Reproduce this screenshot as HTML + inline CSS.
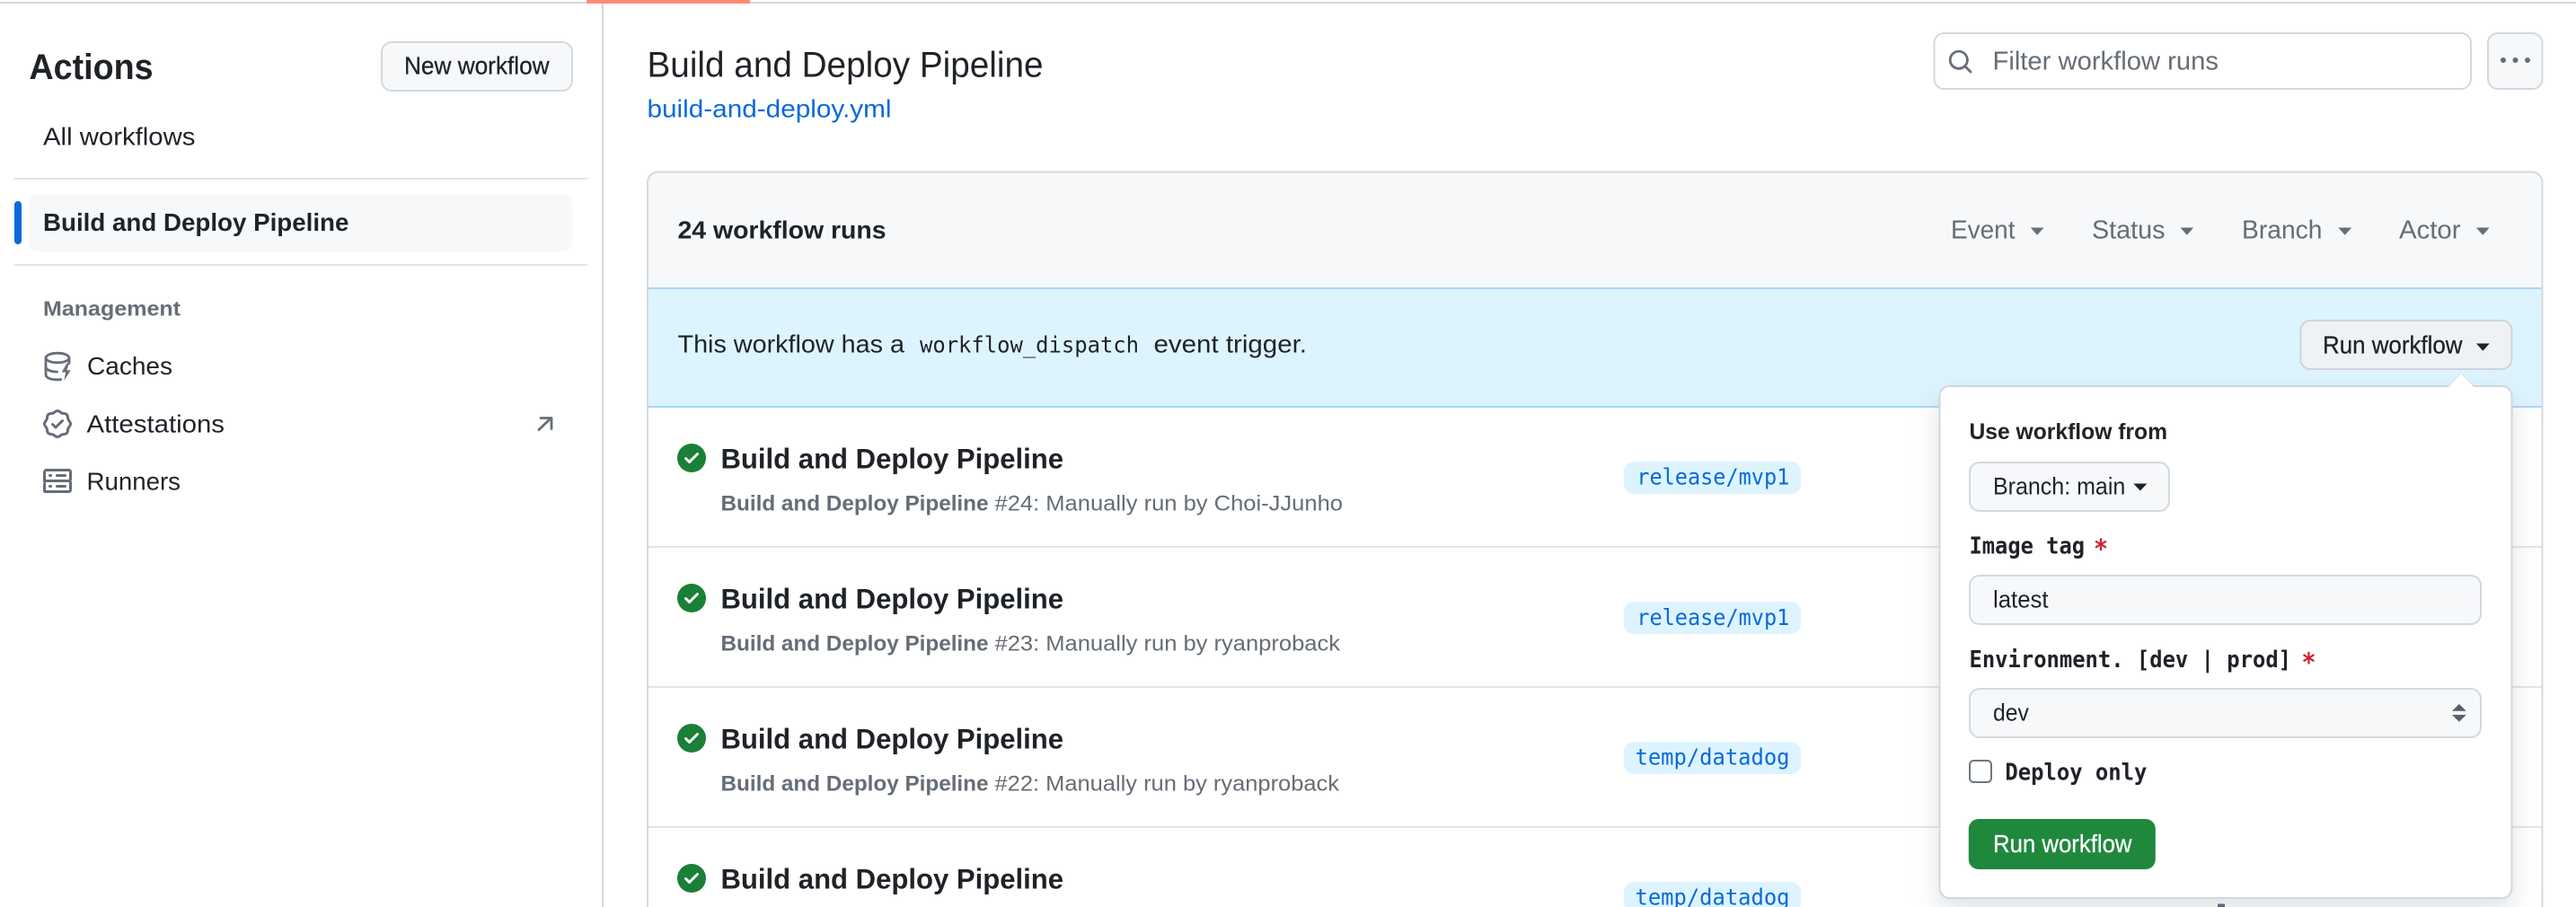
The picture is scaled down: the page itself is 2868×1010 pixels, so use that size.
<!DOCTYPE html>
<html lang="en"><head><meta charset="utf-8"><title>Build and Deploy Pipeline</title>
<style>
html,body{margin:0;padding:0;background:#fff;width:2868px;height:1010px;overflow:hidden}
svg{display:block}
text{font-family:"Liberation Sans",Arial,sans-serif;font-size:27.5px;fill:#1f2328;white-space:pre}
.b{font-weight:700}
.m{stroke:currentColor;stroke-width:.3px}
.mono{font-family:"DejaVu Sans Mono","Liberation Mono",monospace;font-size:25px}
.g{fill:#656d76}
.btn{fill:#f6f8fa;stroke:#d1d9e0;stroke-width:2}
.sub{font-size:24px;fill:#656d76}
.ttl{font-size:31.5px;font-weight:700}
</style></head><body>
<svg xmlns="http://www.w3.org/2000/svg" width="2868" height="1010" viewBox="0 0 2868 1010">
<defs>
<g id="check"><path fill="#1a7f37" d="M8 16A8 8 0 1 1 8 0a8 8 0 0 1 0 16Zm3.78-9.72a.751.751 0 0 0-.018-1.042.751.751 0 0 0-1.042-.018L6.75 9.19 5.28 7.72a.751.751 0 0 0-1.042.018.751.751 0 0 0-.018 1.042l2 2a.75.75 0 0 0 1.06 0Z"/></g>
<filter id="sh" x="-15%" y="-15%" width="130%" height="135%"><feDropShadow dx="0" dy="12" stdDeviation="14" flood-color="#8c959f" flood-opacity=".28"/></filter>
</defs>
<!-- top rule -->
<rect x="0" y="2" width="2868" height="2" fill="#d3d8dd"/>
<rect x="653" y="0" width="182" height="4" fill="#fd8c73"/>
<!-- sidebar -->
<rect x="670" y="4" width="2" height="1006" fill="#d0d7de"/>
<text class="b" x="32.500" y="88" style="font-size:40px" textLength="138" lengthAdjust="spacingAndGlyphs">Actions</text>
<rect class="btn" x="425" y="47" width="212" height="54" rx="11"/>
<text class="m" x="450" y="82.500" textLength="161.600" lengthAdjust="spacingAndGlyphs" style="color:#1f2328">New workflow</text>
<text x="48" y="161.500" textLength="169.400" lengthAdjust="spacingAndGlyphs">All workflows</text>
<rect x="16" y="198" width="638" height="2" fill="#e1e4e8"/>
<rect x="32" y="216" width="605.500" height="64" rx="11" fill="#f6f8fa"/>
<rect x="16" y="224" width="8" height="48" rx="4" fill="#0969da"/>
<text class="b" x="48" y="257" textLength="340.400" lengthAdjust="spacingAndGlyphs">Build and Deploy Pipeline</text>
<rect x="16" y="294" width="638" height="2" fill="#e1e4e8"/>
<text class="b g" x="48" y="351.500" style="font-size:23.500px" textLength="153" lengthAdjust="spacingAndGlyphs">Management</text>
<!-- caches icon -->
<g fill="none" stroke="#656d76" stroke-width="2.800" stroke-linecap="round" stroke-linejoin="round">
<ellipse cx="64" cy="398.500" rx="13" ry="5.300"/>
<path d="M51 398.500V417c0 3.600 5 5.800 13 5.800 1.500 0 2.600 0 3.600-.2"/>
<path d="M77 398.500v6"/>
<path d="M51 408.500c0 3.200 5.500 5.500 12.500 5.500"/>
</g>
<path fill="#656d76" d="M74.500 404.500l-5.800 10h4.400l-1.800 9.500 7.400-11.800h-4.400l2.600-7.700z"/>
<text x="97" y="417" textLength="95" lengthAdjust="spacingAndGlyphs">Caches</text>
<!-- attestations icon -->
<g transform="translate(48 456) scale(2)"><path fill="#656d76" d="m9.585.52.929.68c.153.112.331.186.518.215l1.138.175a2.678 2.678 0 0 1 2.24 2.24l.174 1.139c.029.187.103.365.215.518l.68.928a2.677 2.677 0 0 1 0 3.17l-.68.928a1.174 1.174 0 0 0-.215.518l-.175 1.138a2.678 2.678 0 0 1-2.241 2.241l-1.138.175a1.17 1.17 0 0 0-.518.215l-.928.68a2.677 2.677 0 0 1-3.17 0l-.928-.68a1.174 1.174 0 0 0-.518-.215L3.83 14.41a2.678 2.678 0 0 1-2.24-2.24l-.175-1.138a1.17 1.17 0 0 0-.215-.518l-.68-.928a2.677 2.677 0 0 1 0-3.17l.68-.928c.112-.153.186-.331.215-.518l.175-1.14a2.678 2.678 0 0 1 2.24-2.24l1.139-.175c.187-.029.365-.103.518-.215l.928-.68a2.677 2.677 0 0 1 3.17 0ZM7.303 1.728l-.927.68a2.67 2.67 0 0 1-1.18.489l-1.137.174a1.179 1.179 0 0 0-.987.987l-.174 1.136a2.677 2.677 0 0 1-.489 1.18l-.68.928a1.18 1.18 0 0 0 0 1.394l.68.927c.256.348.424.753.489 1.18l.174 1.137c.078.509.478.909.987.987l1.136.174a2.67 2.67 0 0 1 1.18.489l.928.68c.414.305.979.305 1.394 0l.927-.68a2.67 2.67 0 0 1 1.18-.489l1.137-.174a1.18 1.18 0 0 0 .987-.987l.174-1.136a2.67 2.67 0 0 1 .489-1.18l.68-.928a1.176 1.176 0 0 0 0-1.394l-.68-.927a2.686 2.686 0 0 1-.489-1.18l-.174-1.137a1.179 1.179 0 0 0-.987-.987l-1.136-.174a2.677 2.677 0 0 1-1.18-.489l-.928-.68a1.176 1.176 0 0 0-1.394 0ZM11.28 6.78l-3.75 3.75a.75.75 0 0 1-1.06 0L4.72 8.78a.751.751 0 0 1 .018-1.042.751.751 0 0 1 1.042-.018l1.22 1.22 3.22-3.22a.751.751 0 0 1 1.042.018.751.751 0 0 1 .018 1.042Z"/></g>
<text x="96.500" y="481.500" textLength="153.500" lengthAdjust="spacingAndGlyphs">Attestations</text>
<path d="M600 478.500L613.500 465.500M602 465.500H614V477.500" fill="none" stroke="#656d76" stroke-width="2.800" stroke-linecap="round" stroke-linejoin="round"/>
<!-- runners icon -->
<g transform="translate(48 520) scale(2)"><path fill="#656d76" d="M1.75 1h12.5c.966 0 1.75.784 1.75 1.75v4c0 .372-.116.717-.314 1 .198.283.314.628.314 1v4a1.75 1.75 0 0 1-1.75 1.75H1.75A1.75 1.75 0 0 1 0 13.75v-4c0-.372.116-.717.314-1a1.739 1.739 0 0 1-.314-1v-4C0 1.784.784 1 1.75 1ZM1.5 2.75v4c0 .138.112.25.25.25h12.5a.25.25 0 0 0 .25-.25v-4a.25.25 0 0 0-.25-.25H1.75a.25.25 0 0 0-.25.25Zm.25 5.75a.25.25 0 0 0-.25.25v4c0 .138.112.25.25.25h12.5a.25.25 0 0 0 .25-.25v-4a.25.25 0 0 0-.25-.25ZM7 4.75A.75.75 0 0 1 7.75 4h4.5a.75.75 0 0 1 0 1.5h-4.5A.75.75 0 0 1 7 4.75ZM7.75 10h4.5a.75.75 0 0 1 0 1.5h-4.5a.75.75 0 0 1 0-1.5ZM3 4.75A.75.75 0 0 1 3.75 4h.5a.75.75 0 0 1 0 1.5h-.5A.75.75 0 0 1 3 4.75ZM3.75 10h.5a.75.75 0 0 1 0 1.5h-.5a.75.75 0 0 1 0-1.5Z"/></g>
<text x="96.500" y="545.500" textLength="104.500" lengthAdjust="spacingAndGlyphs">Runners</text>

<!-- page head -->
<text x="720.500" y="85.300" style="font-size:40px" textLength="441" lengthAdjust="spacingAndGlyphs">Build and Deploy Pipeline</text>
<text x="720.500" y="130.700" style="fill:#0969da" textLength="272" lengthAdjust="spacingAndGlyphs">build-and-deploy.yml</text>
<rect x="2153.500" y="37" width="597.500" height="62" rx="11" fill="#fff" stroke="#d1d9e0" stroke-width="2"/>
<g transform="translate(2168 54) scale(1.83)"><path fill="#656d76" d="M10.68 11.74a6 6 0 0 1-7.922-8.982 6 6 0 0 1 8.982 7.922l3.04 3.04a.749.749 0 0 1-.326 1.275.749.749 0 0 1-.734-.215ZM11.5 7a4.499 4.499 0 1 0-8.997 0A4.499 4.499 0 0 0 11.5 7Z"/></g>
<text class="g" x="2218.500" y="77.300" style="font-size:29px" textLength="251.500" lengthAdjust="spacingAndGlyphs">Filter workflow runs</text>
<rect class="btn" x="2770" y="37" width="60.500" height="62" rx="11"/>
<circle cx="2787" cy="67" r="3" fill="#656d76"/><circle cx="2800.500" cy="67" r="3" fill="#656d76"/><circle cx="2814" cy="67" r="3" fill="#656d76"/>

<!-- box -->
<path d="M722 320V203a10.500 10.500 0 0 1 10.500-10.500H2819a10.500 10.500 0 0 1 10.500 10.500V320Z" fill="#f6f8fa"/>
<rect x="722" y="322" width="2107.500" height="130.500" fill="#ddf4ff"/>
<rect x="722" y="320" width="2107.500" height="2" fill="#a9d6f5"/>
<rect x="722" y="452" width="2107.500" height="2" fill="#a9d6f5"/>
<path d="M721 1010V203a11.500 11.500 0 0 1 11.500-11.500H2819a11.500 11.500 0 0 1 11.500 11.500V1010" fill="none" stroke="#d5dae0" stroke-width="2"/>
<text class="b" x="754.500" y="265.700" style="font-size:27.500px" textLength="232" lengthAdjust="spacingAndGlyphs">24 workflow runs</text>
<text class="g" x="2172" y="265.700" style="font-size:29px" textLength="71.500" lengthAdjust="spacingAndGlyphs">Event</text>
<path d="M2260.800 253.500h14.700l-7.350 8.200z" fill="#656d76"/>
<text class="g" x="2329" y="265.700" style="font-size:29px" textLength="81.500" lengthAdjust="spacingAndGlyphs">Status</text>
<path d="M2427.500 253.500h14.700l-7.350 8.200z" fill="#656d76"/>
<text class="g" x="2496" y="265.700" style="font-size:29px" textLength="89.500" lengthAdjust="spacingAndGlyphs">Branch</text>
<path d="M2603.400 253.500h14.700l-7.350 8.200z" fill="#656d76"/>
<text class="g" x="2671" y="265.700" style="font-size:29px" textLength="68.500" lengthAdjust="spacingAndGlyphs">Actor</text>
<path d="M2756.900 253.500h14.700l-7.350 8.200z" fill="#656d76"/>

<text x="754.500" y="392.700" textLength="252.500" lengthAdjust="spacingAndGlyphs">This workflow has a</text>
<text class="mono" x="1024" y="392.700" style="font-size:25px" textLength="244" lengthAdjust="spacingAndGlyphs">workflow_dispatch</text>
<text x="1284.500" y="392.700" textLength="170.500" lengthAdjust="spacingAndGlyphs">event trigger.</text>
<rect x="2561.300" y="357" width="235.200" height="54" rx="11" fill="#eff2f5" stroke="#cdd4db" stroke-width="2"/>
<text class="m" x="2586" y="393.300" textLength="155.500" lengthAdjust="spacingAndGlyphs" style="color:#1f2328">Run workflow</text>
<path d="M2757 382.500h14.700l-7.350 8.200z" fill="#1f2328"/>

<!-- rows -->
<rect x="722" y="608" width="2107.500" height="2" fill="#e1e4e8"/>
<rect x="722" y="764" width="2107.500" height="2" fill="#e1e4e8"/>
<rect x="722" y="920" width="2107.500" height="2" fill="#e1e4e8"/>

<use href="#check" transform="translate(754 494) scale(2)"/>
<text class="ttl" x="802.500" y="521.500" textLength="381.500" lengthAdjust="spacingAndGlyphs">Build and Deploy Pipeline</text>
<text class="sub b" x="802.500" y="568.500" textLength="298" lengthAdjust="spacingAndGlyphs">Build and Deploy Pipeline</text>
<text class="sub" x="1107.500" y="568.500" textLength="387.500" lengthAdjust="spacingAndGlyphs">#24: Manually run by Choi-JJunho</text>
<rect x="1808" y="514" width="197" height="36" rx="11" fill="#ddf4ff"/>
<text class="mono" x="1822.300" y="539.600" style="fill:#0969da" textLength="170" lengthAdjust="spacingAndGlyphs">release/mvp1</text>

<use href="#check" transform="translate(754 650) scale(2)"/>
<text class="ttl" x="802.500" y="677.500" textLength="381.500" lengthAdjust="spacingAndGlyphs">Build and Deploy Pipeline</text>
<text class="sub b" x="802.500" y="724.500" textLength="298" lengthAdjust="spacingAndGlyphs">Build and Deploy Pipeline</text>
<text class="sub" x="1107.500" y="724.500" textLength="384.500" lengthAdjust="spacingAndGlyphs">#23: Manually run by ryanproback</text>
<rect x="1808" y="670" width="197" height="36" rx="11" fill="#ddf4ff"/>
<text class="mono" x="1822.300" y="695.800" style="fill:#0969da" textLength="170" lengthAdjust="spacingAndGlyphs">release/mvp1</text>

<use href="#check" transform="translate(754 806) scale(2)"/>
<text class="ttl" x="802.500" y="833.500" textLength="381.500" lengthAdjust="spacingAndGlyphs">Build and Deploy Pipeline</text>
<text class="sub b" x="802.500" y="880.500" textLength="298" lengthAdjust="spacingAndGlyphs">Build and Deploy Pipeline</text>
<text class="sub" x="1107.500" y="880.500" textLength="383.500" lengthAdjust="spacingAndGlyphs">#22: Manually run by ryanproback</text>
<rect x="1808" y="826" width="197" height="36" rx="11" fill="#ddf4ff"/>
<text class="mono" x="1820.500" y="851.600" style="fill:#0969da" textLength="172" lengthAdjust="spacingAndGlyphs">temp/datadog</text>

<use href="#check" transform="translate(754 962) scale(2)"/>
<text class="ttl" x="802.500" y="989.500" textLength="381.500" lengthAdjust="spacingAndGlyphs">Build and Deploy Pipeline</text>
<rect x="1808" y="982" width="197" height="36" rx="11" fill="#ddf4ff"/>
<text class="mono" x="1820.500" y="1007.700" style="fill:#0969da" textLength="172" lengthAdjust="spacingAndGlyphs">temp/datadog</text>

<!-- stray item under popover -->
<rect x="2469" y="1006.500" width="8" height="3.500" fill="#57606a"/>

<!-- popover -->
<rect x="2159.500" y="430" width="637" height="570" rx="11" fill="#fff" stroke="#d0d7de" stroke-width="2" filter="url(#sh)"/>
<path d="M2726 431L2740 415.500L2754 431Z" fill="#fff"/>
<path d="M2726 430L2740 415.500L2754 430" fill="none" stroke="#d0d7de" stroke-width="1" opacity=".5"/>
<text class="b" x="2192.500" y="488.800" style="font-size:25px" textLength="220.500" lengthAdjust="spacingAndGlyphs">Use workflow from</text>
<rect class="btn" x="2193" y="515" width="222" height="54" rx="11"/>
<text x="2219" y="550.500" style="font-size:26.500px" textLength="147.300" lengthAdjust="spacingAndGlyphs">Branch: main</text>
<path d="M2375.300 538.500h15.100l-7.550 8z" fill="#1f2328"/>
<text class="mono b" x="2192.500" y="616.400" style="font-size:25.500px" textLength="128.500" lengthAdjust="spacingAndGlyphs">Image tag</text>
<text class="mono b" x="2331" y="621" style="fill:#cf222e;font-size:29px" textLength="16" lengthAdjust="spacingAndGlyphs">*</text>
<rect class="btn" x="2193" y="641" width="569" height="54" rx="11"/>
<text x="2219" y="676.600" style="font-size:26.500px" textLength="61.600" lengthAdjust="spacingAndGlyphs">latest</text>
<text class="mono b" x="2192.500" y="742.800" style="font-size:25.500px" textLength="358.500" lengthAdjust="spacingAndGlyphs">Environment. [dev | prod]</text>
<text class="mono b" x="2562.500" y="747.500" style="fill:#cf222e;font-size:29px" textLength="16" lengthAdjust="spacingAndGlyphs">*</text>
<rect class="btn" x="2193" y="767" width="569" height="54" rx="11"/>
<text x="2219" y="802.600" style="font-size:26.500px" textLength="39.800" lengthAdjust="spacingAndGlyphs">dev</text>
<path d="M2730 791.700L2737.900 784L2745.800 791.700Z" fill="#57606a"/>
<path d="M2730 796L2737.900 803.700L2745.800 796Z" fill="#57606a"/>
<rect x="2193" y="847" width="24" height="24" rx="4.500" fill="#fff" stroke="#6e7781" stroke-width="2"/>
<text class="mono b" x="2232.400" y="868.500" style="font-size:25.500px" textLength="158" lengthAdjust="spacingAndGlyphs">Deploy only</text>
<rect x="2191.800" y="912" width="208" height="56" rx="11" fill="#1f883d"/>
<text class="m" x="2219" y="949" textLength="154.500" lengthAdjust="spacingAndGlyphs" style="fill:#fff;color:#fff">Run workflow</text>
</svg>
</body></html>
